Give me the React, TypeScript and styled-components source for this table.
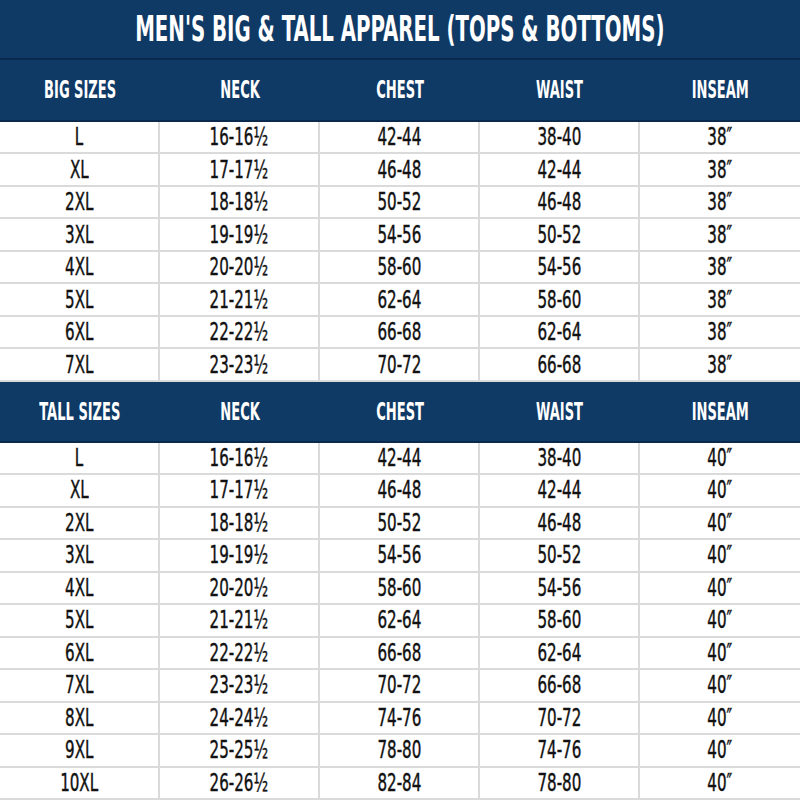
import React from "react";
import styled, { createGlobalStyle } from "styled-components";

const Global = createGlobalStyle`
  html, body { margin: 0; padding: 0; background: #ffffff; }
  * { box-sizing: border-box; }
`;

const Page = styled.div`
  width: 800px;
  height: 800px;
  overflow: hidden;
  background: #ffffff;
  font-family: "DejaVu Sans Condensed", "DejaVu Sans", sans-serif;
  display: flex;
  flex-direction: column;
`;

const TitleBar = styled.div`
  height: 60px;
  background: #103a66;
  border-bottom: 2px solid #0a2a4d;
  display: flex;
  align-items: center;
  justify-content: center;
`;

const Cond = styled.span<{ $sx: number }>`
  display: inline-block;
  white-space: nowrap;
  transform: scaleX(${(p) => p.$sx});
  transform-origin: center;
`;

const TitleText = styled(Cond)`
  color: #ffffff;
  font-weight: 700;
  font-size: 36px;
  line-height: 1;
  margin-top: 0px;
`;

const HeadRow = styled.div<{ $h: number }>`
  height: ${(p) => p.$h}px;
  background: #103a66;
  border-bottom: 2px solid #0a2a4d;
  display: grid;
  grid-template-columns: repeat(5, 160px);
`;

const HeadCell = styled.div`
  display: flex;
  align-items: center;
  justify-content: center;
  color: #ffffff;
  font-weight: 700;
  font-size: 25px;
`;

const Row = styled.div`
  height: 32.5px;
  display: grid;
  grid-template-columns: repeat(5, 160px);
  border-bottom: 2px solid #dadada;
`;

const Cell = styled.div`
  display: flex;
  align-items: center;
  justify-content: center;
  border-right: 2px solid #dadada;
  color: #111111;
  font-size: 24px;
  font-weight: 400;
  -webkit-text-stroke: 0.4px #111111;
  &:last-child { border-right: none; }
`;

const headers = (first: string) => [first, "NECK", "CHEST", "WAIST", "INSEAM"];

const big = [
  ["L", "16-16½", "42-44", "38-40", "38\u2033"],
  ["XL", "17-17½", "46-48", "42-44", "38\u2033"],
  ["2XL", "18-18½", "50-52", "46-48", "38\u2033"],
  ["3XL", "19-19½", "54-56", "50-52", "38\u2033"],
  ["4XL", "20-20½", "58-60", "54-56", "38\u2033"],
  ["5XL", "21-21½", "62-64", "58-60", "38\u2033"],
  ["6XL", "22-22½", "66-68", "62-64", "38\u2033"],
  ["7XL", "23-23½", "70-72", "66-68", "38\u2033"],
];

const tall = [
  ["L", "16-16½", "42-44", "38-40", "40\u2033"],
  ["XL", "17-17½", "46-48", "42-44", "40\u2033"],
  ["2XL", "18-18½", "50-52", "46-48", "40\u2033"],
  ["3XL", "19-19½", "54-56", "50-52", "40\u2033"],
  ["4XL", "20-20½", "58-60", "54-56", "40\u2033"],
  ["5XL", "21-21½", "62-64", "58-60", "40\u2033"],
  ["6XL", "22-22½", "66-68", "62-64", "40\u2033"],
  ["7XL", "23-23½", "70-72", "66-68", "40\u2033"],
  ["8XL", "24-24½", "74-76", "70-72", "40\u2033"],
  ["9XL", "25-25½", "78-80", "74-76", "40\u2033"],
  ["10XL", "26-26½", "82-84", "78-80", "40\u2033"],
];

function Section({ title, rows, h }: { title: string; rows: string[][]; h: number }) {
  return (
    <>
      <HeadRow $h={h}>
        {headers(title).map((t) => (
          <HeadCell key={t}>
            <Cond $sx={0.58}>{t}</Cond>
          </HeadCell>
        ))}
      </HeadRow>
      {rows.map((r) => (
        <Row key={r[0]}>
          {r.map((c, i) => (
            <Cell key={i}>
              <Cond $sx={0.7}>{c}</Cond>
            </Cell>
          ))}
        </Row>
      ))}
    </>
  );
}

export default function App() {
  return (
    <Page>
      <Global />
      <TitleBar>
        <TitleText $sx={0.61}>MEN'S BIG &amp; TALL APPAREL (TOPS &amp; BOTTOMS)</TitleText>
      </TitleBar>
      <Section title="BIG SIZES" rows={big} h={62} />
      <Section title="TALL SIZES" rows={tall} h={61} />
    </Page>
  );
}
